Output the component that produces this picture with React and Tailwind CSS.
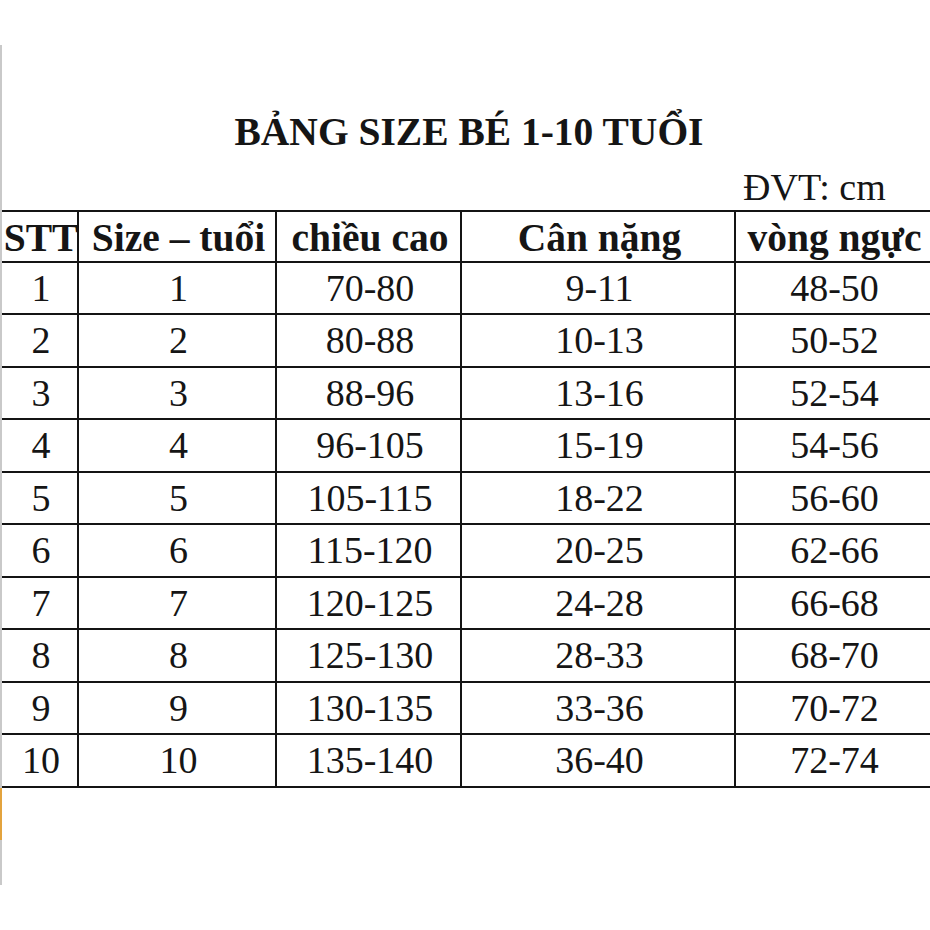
const rows = [
  ['1', '1', '70-80', '9-11', '48-50'],
  ['2', '2', '80-88', '10-13', '50-52'],
  ['3', '3', '88-96', '13-16', '52-54'],
  ['4', '4', '96-105', '15-19', '54-56'],
  ['5', '5', '105-115', '18-22', '56-60'],
  ['6', '6', '115-120', '20-25', '62-66'],
  ['7', '7', '120-125', '24-28', '66-68'],
  ['8', '8', '125-130', '28-33', '68-70'],
  ['9', '9', '130-135', '33-36', '70-72'],
  ['10', '10', '135-140', '36-40', '72-74'],
]

const headers = ['STT', 'Size – tuổi', 'chiều cao', 'Cân nặng', 'vòng ngực']

function SizeTable() {
  return (
    <div className="grid grid-cols-[75px_196px_183px_272px_1fr] gap-[2px] bg-[#141414] py-[2px]">
      {headers.map((h) => (
        <div key={h} className="flex h-[49px] items-center justify-center bg-white pt-[5px] pl-[3px] text-[39.5px] font-bold whitespace-nowrap">
          {h}
        </div>
      ))}
      {rows.map((row) =>
        row.map((cell, i) => (
          <div key={`${row[0]}-${i}`} className="flex h-[50.5px] items-center justify-center bg-white pl-[3px]">
            {cell}
          </div>
        ))
      )}
    </div>
  )
}

export default function App() {
  return (
    <div className="h-[930px] w-[930px] overflow-hidden bg-white pt-[45px] font-['Liberation_Serif',serif] text-[38px] leading-none text-[#151515]">
      <div className="flex h-[840px] flex-col border-l-2 border-[#c9c9c9]">
        <h1 className="mt-[68px] pl-[6px] text-center text-[39.5px] leading-none font-bold">BẢNG SIZE BÉ 1-10 TUỔI</h1>
        <div className="mt-[15px] pl-[741px]">ĐVT: cm</div>
        <div className="mt-[4px]">
          <SizeTable />
        </div>
        <div className="-ml-[2px] h-[52px] w-[2px] bg-[#e3a33d]" />
      </div>
    </div>
  )
}
